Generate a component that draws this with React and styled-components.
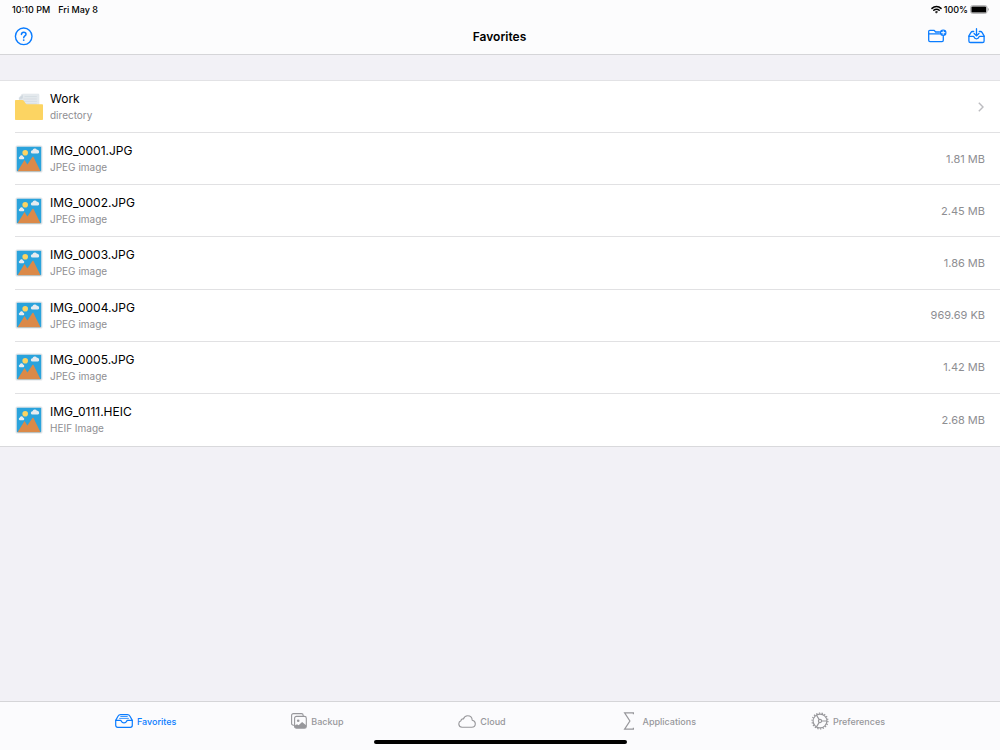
import { useState } from "react";
import styled, { createGlobalStyle } from "styled-components";

const GlobalStyle = createGlobalStyle`
  * {
    box-sizing: border-box;
  }

  body {
    margin: 0;
    background-color: #f2f1f6;
    color: #000;
    font-family: Inter, "Liberation Sans", sans-serif;
  }
`;

const AppContainer = styled.div`
  min-height: 100vh;
  display: flex;
  flex-direction: column;
`;

const Header = styled.header`
  background-color: #fcfcfd;
  border-bottom: 1px solid #d5d5d8;
`;

const StatusBar = styled.div`
  display: flex;
  justify-content: space-between;
  align-items: center;
  height: 18px;
  padding: 0 11px 0 12px;
  font-size: 9px;
  font-weight: 500;
`;

const StatusGroup = styled.div`
  display: flex;
  align-items: center;
  gap: ${({ $gap }) => $gap}px;
`;

const NavBar = styled.div`
  display: grid;
  grid-template-columns: 1fr auto 1fr;
  align-items: center;
  height: 36px;
  padding: 0 15px 0 14px;
`;

const NavTitle = styled.h1`
  margin: 0;
  font-size: 12px;
  font-weight: 600;
`;

const NavActions = styled.div`
  display: flex;
  align-items: center;
  justify-content: flex-end;
  gap: 21px;
`;

const IconButton = styled.button`
  display: flex;
  justify-self: start;
  padding: 0;
  border: none;
  background: none;
  color: #0a7cff;
  cursor: pointer;
`;

const Main = styled.main`
  flex: 1;
  padding-top: 25px;
`;

const FileList = styled.ul`
  display: grid;
  grid-auto-rows: 1fr;
  min-height: 367px;
  margin: 0;
  padding: 0;
  list-style: none;
  background-color: #fff;
  border-top: 1px solid #e2e2e5;
  border-bottom: 1px solid #d9d9dc;
`;

const FileItem = styled.li`
  display: flex;
  margin-left: 15px;

  &:not(:last-child) {
    border-bottom: 1px solid #e1e1e3;
  }
`;

const FileLink = styled.a`
  flex: 1;
  display: flex;
  align-items: center;
  gap: 7px;
  padding-right: 15px;
  color: inherit;
  text-decoration: none;
`;

const FileText = styled.div`
  flex: 1;
  display: flex;
  flex-direction: column;
  gap: 1px;
`;

const FileName = styled.div`
  font-size: 12px;
  line-height: 16px;
`;

const FileKind = styled.div`
  font-size: 10px;
  line-height: 14px;
  color: #8e8e92;
`;

const FileSize = styled.div`
  font-size: 11px;
  color: #8e8e92;
`;

const TabBar = styled.nav`
  height: 49px;
  border-top: 1px solid #d5d5d8;
  background-color: #fbfbfd;
`;

const TabList = styled.div`
  display: flex;
  justify-content: space-evenly;
  height: 38px;
`;

const Tab = styled.button`
  display: flex;
  align-items: center;
  gap: 4px;
  padding: 0;
  border: none;
  background: none;
  font-family: inherit;
  font-size: 9px;
  font-weight: 500;
  color: ${({ $active }) => ($active ? "#0a7cff" : "#97979b")};
  cursor: pointer;
`;

const HomeIndicator = styled.div`
  width: 253px;
  height: 4px;
  margin: 0 auto;
  border-radius: 2px;
  background-color: #000;
`;

const LineIcon = ({ width = 18, height = 18, strokeWidth = 1.1, children }) => (
  <svg
    width={width}
    height={height}
    viewBox={`0 0 ${width} ${height}`}
    fill="none"
    stroke="currentColor"
    strokeWidth={strokeWidth}
    strokeLinecap="round"
    strokeLinejoin="round"
    aria-hidden="true"
  >
    {children}
  </svg>
);

const WifiIcon = () => (
  <LineIcon width={11} height={9} strokeWidth={1.5}>
    <path d="M1 3.4a6.4 6.4 0 0 1 9 0M2.8 5.3a3.8 3.8 0 0 1 5.4 0" />
    <path d="M4.3 6.9a1.8 1.8 0 0 1 2.4 0L5.5 8z" fill="currentColor" strokeWidth="0.4" />
  </LineIcon>
);

const BatteryIcon = () => (
  <svg width="19" height="9" viewBox="0 0 19 9" aria-hidden="true">
    <rect x="0.5" y="0.5" width="16.6" height="8" rx="2.2" fill="#fff" stroke="#a5a5a7" strokeWidth="0.8" />
    <rect x="1.4" y="1.4" width="14.8" height="6.2" rx="1.2" fill="#000" />
    <path d="M17.9 3.1c1.2.4 1.2 2.4 0 2.8z" fill="#98989a" />
  </svg>
);

const HelpIcon = () => (
  <LineIcon width={19} height={19} strokeWidth={1.4}>
    <circle cx="9.7" cy="9.3" r="8.3" />
    <path
      d="M7.4 7.4c.1-1.4 1-2.2 2.3-2.2 1.4 0 2.3.8 2.3 2 0 1.7-2.3 1.7-2.3 3.5"
      strokeWidth="1.5"
    />
    <circle cx="9.7" cy="13.1" r="0.9" fill="currentColor" stroke="none" />
  </LineIcon>
);

const NewFolderIcon = () => (
  <LineIcon width={19} height={16} strokeWidth={1.3}>
    <path d="M11.5 4H7.6L6.2 2.3H1.9c-.7 0-1.2.5-1.2 1.2v8.8c0 .8.5 1.3 1.3 1.3h12c.8 0 1.3-.5 1.3-1.3V8.4" />
    <path d="M.8 5.9h10.7" />
    <circle cx="15.2" cy="4.7" r="3.3" fill="currentColor" stroke="none" />
    <path d="M15.2 3v3.4M13.5 4.7h3.4" stroke="#fff" strokeWidth="1" />
  </LineIcon>
);

const DownloadTrayIcon = () => (
  <LineIcon width={17} height={16} strokeWidth={1.3}>
    <path d="M5.7 3.5H4.5c-.7 0-1.1.2-1.5.8L.9 7.9v5c0 1 .6 1.6 1.6 1.6h12c1 0 1.6-.6 1.6-1.6v-5L14 4.3c-.4-.6-.8-.8-1.5-.8h-1.2" />
    <path d="M.9 8.3h4.4c.3 0 .5.2.6.5.4 1.2 1.3 2 2.6 2s2.2-.8 2.6-2c.1-.3.3-.5.6-.5h4.4" />
    <path d="M8.5.7v7M6.1 5.5l2.4 2.4 2.4-2.4" />
  </LineIcon>
);

const ChevronIcon = () => (
  <svg width="8" height="10" viewBox="0 0 8 10" fill="none" stroke="#bcbcc0" strokeWidth="1.4" aria-hidden="true">
    <path d="M1.8.8 6 5 1.8 9.2" />
  </svg>
);

const FolderIcon = () => (
  <svg width="28" height="28" viewBox="0 0 28 28" aria-hidden="true">
    <path d="M4.3 9 3.7 4.8 7.5.8h15.7c.6 0 1 .4 1 1V13H4.3z" fill="#dde3e8" />
    <path d="M6.4 1h16.9c.5 0 .8.3.8.8V13H7z" fill="#e4e9ed" />
    <path d="M4 5.7 7.8 1.8v3.1c0 .5-.3.8-.8.8z" fill="#ced7de" />
    <path d="M9.5 3.6h12.3M8.4 6h13.4M8.4 8.4h13.4M9.4 10.8h12.4" stroke="#cdd5dc" strokeWidth="0.6" />
    <path
      d="M0 8c0-.6.4-1 1-1h6.4c.5 0 .9.2 1.2.6l2.1 3c.3.4.7.6 1.2.6H27c.6 0 1 .4 1 1V26c0 .6-.4 1-1 1H1c-.6 0-1-.4-1-1z"
      fill="#fcd462"
    />
  </svg>
);

const ImageIcon = () => (
  <svg width="28" height="28" viewBox="0 0 28 28" aria-hidden="true">
    <rect x="0.5" y="0.5" width="27" height="27" rx="1.5" fill="#dfe4e8" />
    <rect x="1.8" y="1.8" width="24.4" height="24.4" rx="0.8" fill="#2aa3dc" />
    <circle cx="10.2" cy="7.8" r="2.8" fill="#fcd462" />
    <path d="M17.6 8.6a1.7 1.7 0 0 1-.1-3.4 2.4 2.4 0 0 1 4.4-.5 2.1 2.1 0 0 1 1.2 3.9z" fill="#e6ebef" />
    <path d="M4.8 14.2a1.3 1.3 0 0 1-.1-2.5 1.8 1.8 0 0 1 3.4-.3 1.5 1.5 0 0 1 .3 2.8z" fill="#e6ebef" />
    <path d="M2.6 26.2 9 15.7c.3-.5.7-.5 1 0l2.4 3.7 5-7.3c.3-.5.8-.5 1.1 0l7 14.1z" fill="#db8948" />
  </svg>
);

const FavoritesIcon = () => (
  <LineIcon width={18} height={14} strokeWidth={1.2}>
    <path d="M.7 6.4 3 2.3C3.6 1.2 4.4.7 5.6.7h6.8c1.2 0 2 .5 2.6 1.6l2.3 4.1v4.9c0 1.2-.8 2-2 2H2.7c-1.2 0-2-.8-2-2z" />
    <path d="M.8 6.4h4.6c.5 0 .8.3 1 .8.4 1 1.3 1.6 2.6 1.6s2.2-.6 2.6-1.6c.2-.5.5-.8 1-.8h4.6" />
    <path d="M5.7 2.5h6.6M4.6 4.4h8.8" strokeWidth="0.8" />
  </LineIcon>
);

const BackupIcon = () => (
  <LineIcon width={16} height={16}>
    <path d="M3.1 12.2H2.4c-1.1 0-1.8-.7-1.8-1.8V2.4C.6 1.3 1.3.6 2.4.6h8c1.1 0 1.8.7 1.8 1.8v.7" />
    <rect x="3.6" y="3.4" width="11.7" height="11.8" rx="1.8" />
    <circle cx="7.2" cy="7.7" r="1.3" fill="currentColor" stroke="none" />
    <path
      d="M3.8 12.6 6 11.3l1.6 1 3.5-3.2 4 3.2v1.5c0 .8-.5 1.3-1.3 1.3H5.2c-.8 0-1.4-.5-1.4-1.3z"
      fill="currentColor"
      stroke="none"
    />
  </LineIcon>
);

const CloudIcon = () => (
  <LineIcon width={18} height={13}>
    <path d="M4 12.2a3.3 3.3 0 0 1-1-6.4c.1-1.4 1.2-2.1 2.4-1.8C6.1 2 7.6.8 9.6.8c2.6 0 4.5 1.9 4.6 4.5 1.8.3 3.1 1.6 3.1 3.4 0 2-1.4 3.5-3.5 3.5z" />
  </LineIcon>
);

const SigmaIcon = () => (
  <LineIcon width={18} height={18} strokeWidth={1.2}>
    <path d="M12.4 2.2V.8H3.6L8.9 9l-5.3 8.2h8.8v-1.4" strokeLinejoin="miter" strokeLinecap="butt" />
  </LineIcon>
);

const GearIcon = () => (
  <LineIcon width={18} height={18} strokeWidth={1.1}>
    <circle cx="9" cy="9" r="6.9" />
    <circle cx="9" cy="9" r="7.9" strokeDasharray="1.3 1.458" strokeWidth="1.3" strokeLinecap="butt" />
    <circle cx="9" cy="9" r="1.6" />
    <path d="M10.6 9h5.3M8.2 7.6 5.5 3.1M8.2 10.4l-2.7 4.5" />
  </LineIcon>
);

const files = [
  { name: "Work", kind: "directory" },
  { name: "IMG_0001.JPG", kind: "JPEG image", size: "1.81 MB" },
  { name: "IMG_0002.JPG", kind: "JPEG image", size: "2.45 MB" },
  { name: "IMG_0003.JPG", kind: "JPEG image", size: "1.86 MB" },
  { name: "IMG_0004.JPG", kind: "JPEG image", size: "969.69 KB" },
  { name: "IMG_0005.JPG", kind: "JPEG image", size: "1.42 MB" },
  { name: "IMG_0111.HEIC", kind: "HEIF Image", size: "2.68 MB" },
];

const tabs = [
  { title: "Favorites", Icon: FavoritesIcon },
  { title: "Backup", Icon: BackupIcon },
  { title: "Cloud", Icon: CloudIcon },
  { title: "Applications", Icon: SigmaIcon },
  { title: "Preferences", Icon: GearIcon },
];

const App = () => {
  const [activeTab, setActiveTab] = useState("Favorites");

  return (
    <AppContainer>
      <GlobalStyle />
      <Header>
        <StatusBar>
          <StatusGroup $gap={8}>
            <span>10:10 PM</span>
            <span>Fri May 8</span>
          </StatusGroup>
          <StatusGroup $gap={2}>
            <WifiIcon />
            <span>100%</span>
            <BatteryIcon />
          </StatusGroup>
        </StatusBar>
        <NavBar>
          <IconButton aria-label="Help">
            <HelpIcon />
          </IconButton>
          <NavTitle>Favorites</NavTitle>
          <NavActions>
            <IconButton aria-label="New folder">
              <NewFolderIcon />
            </IconButton>
            <IconButton aria-label="Import">
              <DownloadTrayIcon />
            </IconButton>
          </NavActions>
        </NavBar>
      </Header>
      <Main>
        <FileList>
          {files.map((file) => (
            <FileItem key={file.name}>
              <FileLink href={`#${file.name}`}>
                {file.size ? <ImageIcon /> : <FolderIcon />}
                <FileText>
                  <FileName>{file.name}</FileName>
                  <FileKind>{file.kind}</FileKind>
                </FileText>
                {file.size ? <FileSize>{file.size}</FileSize> : <ChevronIcon />}
              </FileLink>
            </FileItem>
          ))}
        </FileList>
      </Main>
      <TabBar>
        <TabList>
          {tabs.map(({ title, Icon }) => (
            <Tab
              key={title}
              $active={title === activeTab}
              onClick={() => setActiveTab(title)}
            >
              <Icon />
              {title}
            </Tab>
          ))}
        </TabList>
        <HomeIndicator />
      </TabBar>
    </AppContainer>
  );
};

export default App;
